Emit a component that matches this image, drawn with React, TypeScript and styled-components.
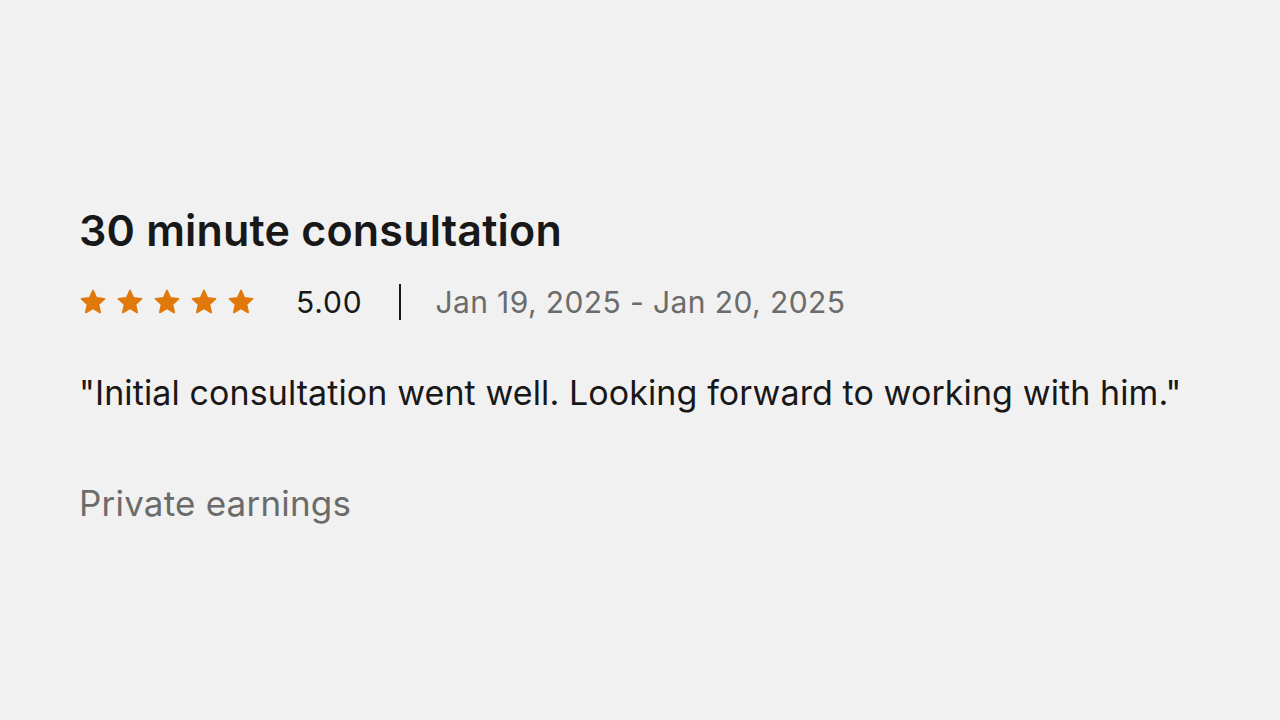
import styled, { createGlobalStyle } from "styled-components";

const GlobalStyle = createGlobalStyle`
  html, body {
    margin: 0;
    padding: 0;
    background: #f1f1f1;
  }
  body {
    font-family: Inter, "Liberation Sans", sans-serif;
    color: #181818;
  }
`;

const Page = styled.div`
  width: 1280px;
  height: 720px;
  box-sizing: border-box;
  padding: 205px 79px 0;
`;

const Title = styled.h2`
  margin: 0;
  font-size: 43px;
  line-height: 50px;
  font-weight: 600;
  letter-spacing: 0.2px;
  color: #181818;
`;

const MetaRow = styled.div`
  display: flex;
  align-items: center;
  margin-top: 27px;
  height: 40px;
`;

const Stars = styled.div`
  display: flex;
  gap: 9px;
`;

const RatingValue = styled.span`
  margin-left: 41px;
  font-size: 30px;
  letter-spacing: 0.8px;
  color: #181818;
`;

const Divider = styled.span`
  width: 2px;
  height: 36px;
  background: #181818;
  margin: 0 34px 0 37px;
`;

const DateRange = styled.span`
  font-size: 30px;
  letter-spacing: 0.4px;
  color: #6b6b6b;
`;

const Quote = styled.p`
  margin: 48px 0 0;
  font-size: 34px;
  line-height: 46px;
  letter-spacing: 0.1px;
  color: #181818;
`;

const Earnings = styled.p`
  margin: 64px 0 0;
  font-size: 35px;
  line-height: 46px;
  letter-spacing: 0.2px;
  color: #6b6b6b;
`;

const Star = () => (
  <svg width="28" height="28" viewBox="0 0 24 24">
    <path
      fill="#e1780c"
      stroke="#e1780c"
      strokeWidth="1.6"
      strokeLinejoin="round"
      d="M12 2.2l2.9 6.4 6.9.7-5.2 4.7 1.5 6.9L12 17.4l-6.1 3.5 1.5-6.9-5.2-4.7 6.9-.7z"
    />
  </svg>
);

export default function App() {
  return (
    <>
      <GlobalStyle />
      <Page>
        <Title>30 minute consultation</Title>
        <MetaRow>
          <Stars>
            {[0, 1, 2, 3, 4].map((i) => (
              <Star key={i} />
            ))}
          </Stars>
          <RatingValue>5.00</RatingValue>
          <Divider />
          <DateRange>Jan 19, 2025 - Jan 20, 2025</DateRange>
        </MetaRow>
        <Quote>
          "Initial consultation went well. Looking forward to working with him."
        </Quote>
        <Earnings>Private earnings</Earnings>
      </Page>
    </>
  );
}
